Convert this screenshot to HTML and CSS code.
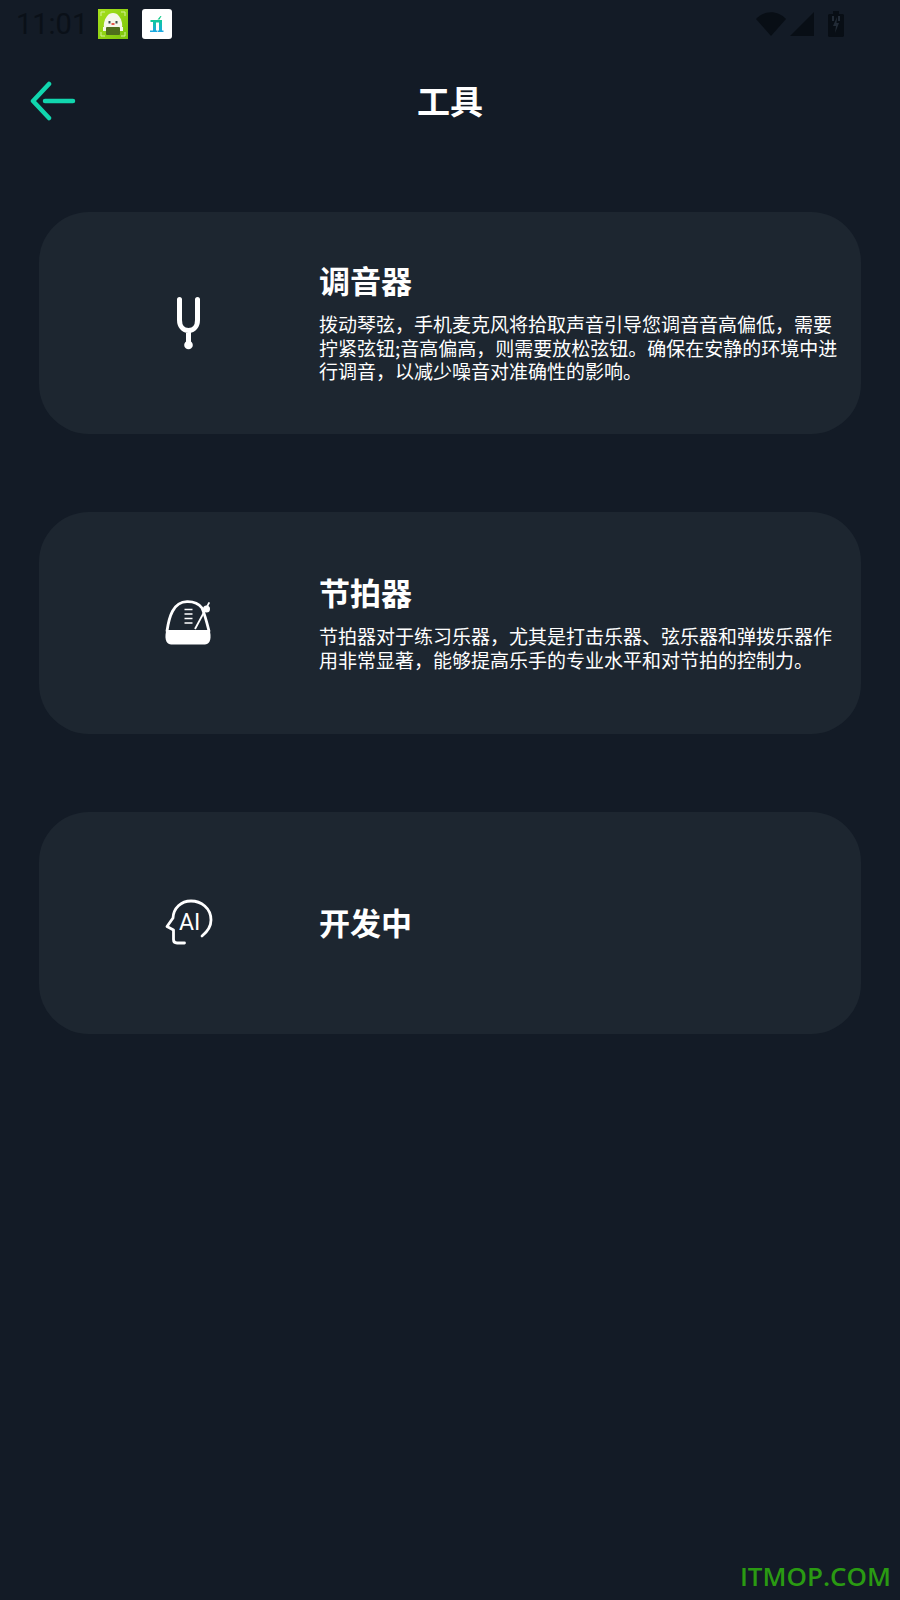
FILE: index.html
```html
<!DOCTYPE html>
<html lang="zh">
<head>
<meta charset="utf-8">
<title>工具</title>
<link rel="stylesheet" href="styles.css">
</head>
<body>
<div class="page">
  <div class="status">
    <span class="time">11:01</span>
    <svg class="app" viewBox="0 0 30 30">
      <defs><linearGradient id="g" x1="0" y1="0" x2="1" y2="1"><stop offset="0" stop-color="#a6e01c"/><stop offset="1" stop-color="#7cc50c"/></linearGradient></defs>
      <rect width="30" height="30" fill="url(#g)"/>
      <path d="M3 7V3H7M23 3H27V7M27 23V27H23M7 27H3V23" fill="none" stroke="#d4f29a" stroke-width="1"/>
      <path d="M15 4C20 4 23 9 24 14C25 20 22 24 15 24C8 24 5 20 6 14C7 9 10 4 15 4Z" fill="#f4f6ea"/>
      <rect x="10.500" y="12" width="2" height="2.500" fill="#3b4a4a"/><rect x="17.500" y="12" width="2" height="2.500" fill="#3b4a4a"/>
      <rect x="13.500" y="14" width="3" height="2" fill="#e4574a"/>
      <rect x="8" y="18" width="14" height="8" rx="1" fill="#4f6f1c"/>
      <rect x="5" y="18" width="3" height="4" fill="#f4f6ea"/><rect x="22" y="18" width="3" height="4" fill="#f4f6ea"/>
    </svg>
    <svg class="app app-white" viewBox="0 0 30 30">
      <defs><linearGradient id="n" x1="0" y1="0" x2="0" y2="1"><stop offset="0" stop-color="#0fca98"/><stop offset="1" stop-color="#1aa6e4"/></linearGradient></defs>
      <rect width="30" height="30" rx="3" fill="#fff"/>
      <path d="M8.500 11H20V21.500H21.500V23H15.800V21.500H17V13.500H14V21.500H15.300V23H8V21.500H11V13H8.500Z" fill="url(#n)"/>
      <path d="M15.500 10.500L18.500 7H19.500L17.500 10.500Z" fill="#0fca88"/>
    </svg>
    <span class="status-gap"></span>
    <svg class="sys wifi" viewBox="0 0 30 24"><path d="M0 7C8-2 22-2 30 7L15 24Z" fill="#080e15"/></svg>
    <svg class="sys signal" viewBox="0 0 24 24"><path d="M24 0V24H0Z" fill="#080e15"/></svg>
    <svg class="sys battery" viewBox="0 0 16 26"><path d="M5 0H11V3H14.500C15.300 3 16 3.700 16 4.500V24.500C16 25.300 15.300 26 14.500 26H1.500C.7 26 0 25.300 0 24.500V4.500C0 3.700 .7 3 1.500 3H5Z" fill="#080e15"/><path d="M9 6L5 15H8L7 22L11 12H8.500Z" fill="#222b36"/><rect x="4" y="5" width="2" height="5" fill="#222b36"/><rect x="10" y="5" width="2" height="5" fill="#222b36"/></svg>
  </div>

  <header class="topbar">
    <svg class="back" viewBox="0 0 46 40"><path d="M19 3L3 20L19 37M15 20H43" fill="none" stroke="#11d6ae" stroke-width="4.500" stroke-linecap="round" stroke-linejoin="round"/></svg>
    <h1 class="heading">工具</h1>
  </header>

  <main class="cards">
    <section class="card">
      <svg class="icon" viewBox="0 0 56 56">
        <path d="M19.500 4.500V25C19.500 31 23 35.500 28.500 35.500C34 35.500 37.500 31 37.500 25V4.500M28.500 35.500V50" fill="none" stroke="#fff" stroke-width="5" stroke-linecap="round"/>
        <circle cx="28.500" cy="50" r="4.300" fill="#fff"/>
      </svg>
      <div class="copy">
        <h2 class="title">调音器</h2>
        <p class="desc">拨动琴弦，手机麦克风将拾取声音引导您调音音高偏低，需要拧紧弦钮;音高偏高，则需要放松弦钮。确保在安静的环境中进行调音，以减少噪音对准确性的影响。</p>
      </div>
    </section>

    <section class="card">
      <svg class="icon" viewBox="0 0 56 56">
        <path d="M7 36C9 22 13 7 27 6.700C34 6.500 39 9 42 13C45 20 47 28 49 36" fill="none" stroke="#fff" stroke-width="2.800" stroke-linecap="round"/>
        <path d="M6.500 35H49.500C51.500 41 51 49.500 45 49.500H11C5 49.500 4.500 41 6.500 35Z" fill="#fff"/>
        <path d="M24.500 14.500H32.500M24.500 19H32.500M24.500 23.500H32.500M24.500 28H32.500" stroke="#fff" stroke-width="1.700" fill="none"/>
        <path d="M35 34L49.300 7.300" stroke="#fff" stroke-width="1.800" fill="none"/>
        <circle cx="46.500" cy="14" r="3.500" fill="#fff"/>
      </svg>
      <div class="copy">
        <h2 class="title">节拍器</h2>
        <p class="desc">节拍器对于练习乐器，尤其是打击乐器、弦乐器和弹拨乐器作用非常显著，能够提高乐手的专业水平和对节拍的控制力。</p>
      </div>
    </section>

    <section class="card">
      <svg class="icon" viewBox="0 0 56 56">
        <path d="M42 41C47 37 51 31 51 25C51 13 41 6 31 6C21 6 13.500 13 13 23L7 31.500L13.500 35V44.500C13.500 47 15 48 17 48H24.500" fill="none" stroke="#fff" stroke-width="2.800" stroke-linecap="round" stroke-linejoin="round"/>
        <text class="ai" x="19" y="35">AI</text>
      </svg>
      <div class="copy">
        <h2 class="title">开发中</h2>
      </div>
    </section>
  </main>

  <div class="mark">ITMOP.COM</div>
</div>
</body>
</html>
```

FILE: styles.css
```css
* { box-sizing: border-box; }
html, body { margin: 0; padding: 0; }
body {
  background: #131b26;
  font-family: "Noto Sans CJK SC", "Noto Sans", sans-serif;
  color: #fff;
}
.page {
  position: relative;
  width: 900px;
  height: 1600px;
  overflow: hidden;
  background: #131b26;
}
.status {
  display: flex;
  align-items: center;
  height: 48px;
  padding: 0 56px 0 16px;
}
.time {
  font-family: Roboto, sans-serif;
  font-size: 29px;
  color: #0a1018;
  width: 82px;
}
.app { width: 30px; height: 30px; margin-right: 14px; }
.status-gap { flex: 1; }
.sys { display: block; }
.wifi { width: 30px; height: 24px; margin-right: 4px; }
.signal { width: 24px; height: 24px; margin-right: 14px; }
.battery { width: 16px; height: 26px; }
.topbar {
  position: relative;
  display: flex;
  align-items: center;
  justify-content: center;
  height: 106px;
}
.back {
  position: absolute;
  left: 30px;
  top: 33px;
  width: 46px;
  height: 40px;
}
.heading {
  margin: 0;
  font-size: 33px;
  font-weight: 700;
  line-height: 1.2;
}
.cards {
  display: flex;
  flex-direction: column;
  gap: 78px;
  padding: 58px 39px 0;
}
.card {
  display: flex;
  align-items: center;
  height: 222px;
  padding-left: 121px;
  background: #1d2630;
  border-radius: 50px;
}
.icon { flex: none; width: 56px; height: 56px; margin-right: 103px; }
.ai { font-family: Roboto, sans-serif; font-size: 23px; fill: #fff; }
.copy { flex: 1; padding-bottom: 3px; }
.title {
  margin: 0;
  font-size: 31px;
  font-weight: 700;
  line-height: 40px;
}
.desc {
  margin: 12px 0 0;
  width: 520px;
  font-size: 19px;
  line-height: 23.500px;
}
.mark {
  position: absolute;
  right: 9px;
  bottom: 6px;
  font-family: "Open Sans", sans-serif;
  font-weight: 600;
  font-size: 26px;
  color: #2a9a12;
}
```
